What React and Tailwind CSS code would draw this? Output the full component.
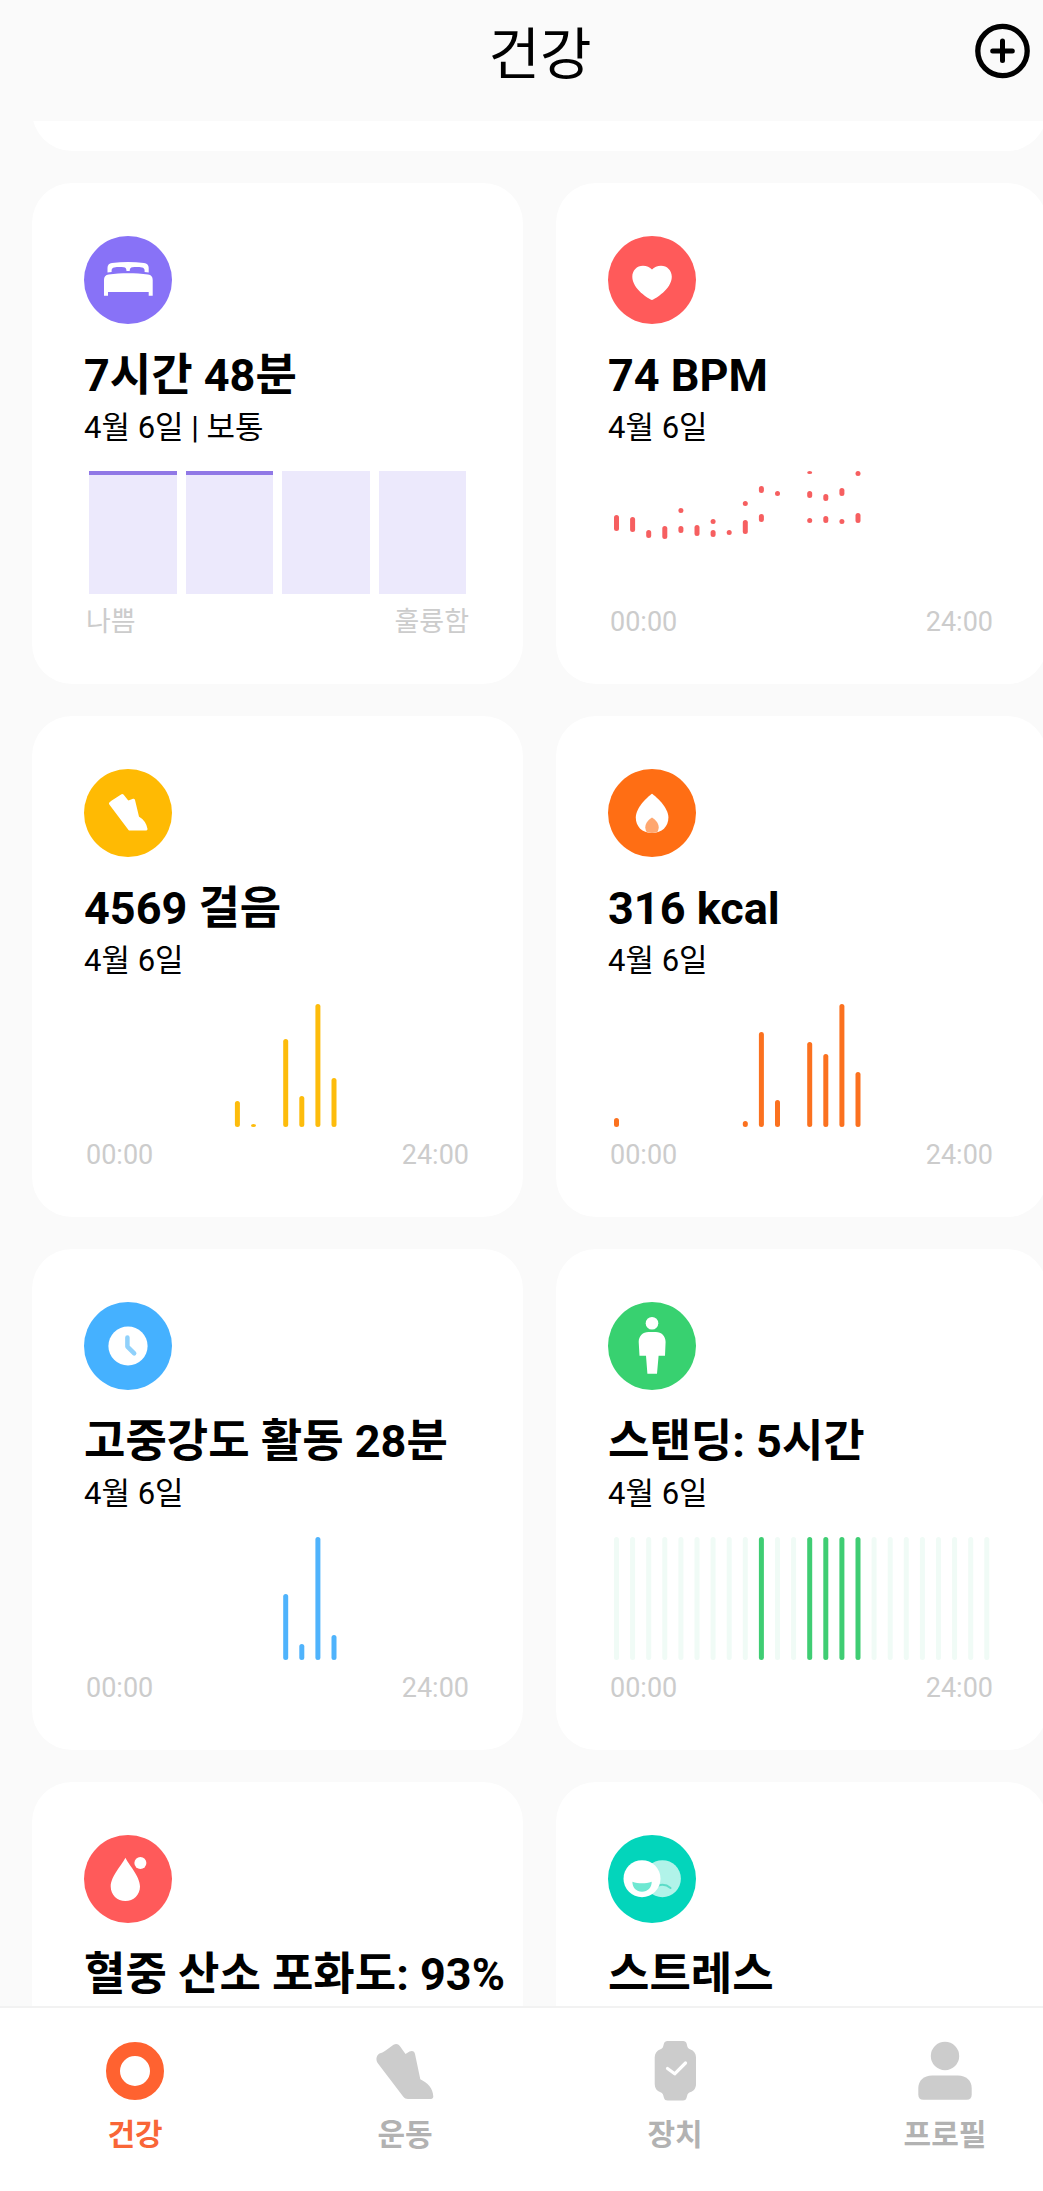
const HOURS = Array.from({ length: 24 }, (_, i) => i);
const CHART_HEIGHT = 123;

const barX = (hour) => 1 + hour * 16.1;

const stepBars = { 9: 26, 10: 3, 12: 88, 13: 31, 14: 123, 15: 49 };
const calorieBars = { 0: 9, 8: 6, 9: 95, 10: 27, 12: 85, 13: 73, 14: 123, 15: 55 };
const activityBars = { 12: 66, 13: 16, 14: 123, 15: 25 };
const standingHours = [9, 12, 13, 14, 15];

// [hour, top, bottom]
const heartRanges = [
  [0, 44, 60],
  [1, 46, 61],
  [2, 59, 67],
  [3, 55, 68],
  [4, 37, 42],
  [4, 55, 62],
  [5, 54, 65],
  [6, 48, 53],
  [6, 59, 66],
  [7, 59, 64],
  [8, 30, 35],
  [8, 49, 63],
  [9, 15, 22],
  [9, 43, 51],
  [10, 20, 25],
  [12, 0, 3],
  [12, 20, 27],
  [12, 47, 52],
  [13, 23, 30],
  [13, 45, 52],
  [14, 17, 25],
  [14, 48, 53],
  [15, 0, 5],
  [15, 42, 52],
];

function ChartFrame({ label, children }) {
  return (
    <svg
      role="img"
      aria-label={label}
      viewBox="0 0 377 123"
      preserveAspectRatio="none"
      className="block h-[123px] w-full"
    >
      {children}
    </svg>
  );
}

function BarChart({ label, bars, color }) {
  return (
    <ChartFrame label={label}>
      {Object.entries(bars).map(([hour, height]) => (
        <rect
          key={hour}
          x={barX(Number(hour))}
          y={CHART_HEIGHT - height}
          width="5"
          height={height}
          rx="2.5"
          fill={color}
        />
      ))}
    </ChartFrame>
  );
}

function HeartChart() {
  return (
    <ChartFrame label="심박수">
      {heartRanges.map(([hour, top, bottom]) => (
        <rect
          key={`${hour}-${top}`}
          x={barX(hour)}
          y={top}
          width="5"
          height={bottom - top}
          rx="2.5"
          fill="#f65f60"
        />
      ))}
    </ChartFrame>
  );
}

function StandingChart() {
  return (
    <ChartFrame label="스탠딩">
      {HOURS.map((hour) => (
        <rect
          key={hour}
          x={barX(hour)}
          y="0"
          width="5"
          height={CHART_HEIGHT}
          rx="2.5"
          fill={standingHours.includes(hour) ? '#3fcd73' : '#f0fbf6'}
        />
      ))}
    </ChartFrame>
  );
}

function SleepChart() {
  return (
    <div className="grid h-[123px] grid-cols-4 gap-[9px]">
      <div className="border-t-4 border-[#9078e6] bg-[#ece9fc]" />
      <div className="border-t-4 border-[#9078e6] bg-[#ece9fc]" />
      <div className="bg-[#ece9fc]" />
      <div className="bg-[#ece9fc]" />
    </div>
  );
}

function Badge({ color, children }) {
  return (
    <svg viewBox="0 0 88 88" className="block size-[88px]" aria-hidden="true">
      <circle cx="44" cy="44" r="44" fill={color} />
      {children}
    </svg>
  );
}

const icons = {
  sleep: (
    <Badge color="#8872f7">
      <path
        fill="#fff"
        d="M23.5 36.4V31.8C23.5 28.8 25 27.3 28 26.9C38.5 25.6 49.5 25.6 60 26.9C63 27.3 64.7 28.8 64.7 31.8V36.4L60.6 36V34.6C60.6 32.6 59.5 31.8 58 31.5C55 31 51.500 31 48.500 31.3C46.500 31.6 45.9 32.5 45.7 35H42.5C42.3 32.5 41.700 31.6 39.700 31.3C36.700 31 33.200 31 30.200 31.5C28.700 31.8 27.6 32.6 27.6 34.6V36Z"
      />
      <path
        fill="#fff"
        d="M20 59.7V44C20 40.6 21.5 39 24.6 38.5C37 36.8 51.5 36.8 64 38.5C67.2 39 68.7 40.6 68.7 44V59.7H64.7V56H24V59.7Z"
      />
    </Badge>
  ),
  heart: (
    <Badge color="#ff5a5a">
      <path
        fill="#fff"
        d="M44 64C41 63.2 24.3 53 24.3 40.8C24.3 34.5 28.8 29.7 35 29.7C38.6 29.7 41.9 31.1 44 33.5C46.1 31.1 49.4 29.7 53 29.7C59.2 29.7 63.8 34.5 63.8 40.8C63.8 53 47 63.2 44 64Z"
      />
    </Badge>
  ),
  steps: (
    <Badge color="#ffba03">
      <path
        fill="#fff"
        stroke="#fff"
        strokeWidth="3"
        strokeLinejoin="round"
        d="M26.5 34.5L29 32.5L38.3 26.5L43.7 33.3L49.5 31.2L53.7 48.5C58 51 61 54.5 62 60H45.7Z"
      />
    </Badge>
  ),
  calories: (
    <Badge color="#ff6e14">
      <path
        fill="#fff"
        d="M44 24.8C48 27.5 60.4 38.5 60.4 48.5C60.4 57.5 54 64 44 64C34 64 27.8 57.5 27.8 48.5C27.8 38.5 40 27.5 44 24.8Z"
      />
      <path
        fill="#ffa76f"
        d="M44 48.6C46.5 50.3 50.7 53.5 50.7 58.3C50.7 60.6 49.9 62.3 48.8 63.6C46 64.1 42 64.1 39.2 63.6C38.1 62.3 37.3 60.6 37.3 58.3C37.3 53.5 41.5 50.3 44 48.6Z"
      />
    </Badge>
  ),
  activity: (
    <Badge color="#45b1ff">
      <circle cx="44" cy="44" r="19.6" fill="#fff" />
      <path
        d="M43.4 35.4V44.6L50.2 51.4"
        fill="none"
        stroke="#90d1fb"
        strokeWidth="4.5"
        strokeLinecap="round"
        strokeLinejoin="round"
      />
    </Badge>
  ),
  standing: (
    <Badge color="#38d170">
      <circle cx="44" cy="21.2" r="6.3" fill="#fff" />
      <path
        fill="#fff"
        d="M40.5 30H47.8C53.5 30 57.6 34 57.6 40L57 53.8H50.6L49 71.7H39.4L38 53.8H31.5L30.7 40C30.7 34 34.8 30 40.5 30Z"
      />
    </Badge>
  ),
  oxygen: (
    <Badge color="#ff5a5a">
      <path
        fill="#fff"
        d="M41.4 22.7C43.5 28 56 41 56 51.5C56 60 49.5 66 41.4 66C33.3 66 26.7 60 26.7 51.5C26.7 41 39.3 28 41.4 22.7Z"
      />
      <circle cx="56.4" cy="28" r="6" fill="#fff" />
    </Badge>
  ),
  stress: (
    <Badge color="#03d5bb">
      <circle cx="54.4" cy="43.7" r="18.5" fill="#b1f3e9" />
      <path
        d="M50 50.7C54.5 49 59 50 62.5 53"
        fill="none"
        stroke="#5cdcc8"
        strokeWidth="2"
        strokeLinecap="round"
      />
      <circle cx="34" cy="43.7" r="18.5" fill="#fff" />
      <path
        fill="#6ee8d2"
        d="M24.4 46.7C30.5 48.7 37.5 48.7 43.7 46.7C43.8 52.5 39.7 56.7 34 56.7C28.3 56.7 24.3 52.5 24.4 46.7Z"
      />
    </Badge>
  ),
};

const cards = [
  {
    id: 'sleep',
    title: '7시간 48분',
    date: '4월 6일 | 보통',
    chart: <SleepChart />,
    range: ['나쁨', '훌륭함'],
  },
  { id: 'heart', title: '74 BPM', date: '4월 6일', chart: <HeartChart /> },
  {
    id: 'steps',
    title: '4569 걸음',
    date: '4월 6일',
    chart: <BarChart label="걸음" bars={stepBars} color="#fdbc0c" />,
  },
  {
    id: 'calories',
    title: '316 kcal',
    date: '4월 6일',
    chart: <BarChart label="칼로리" bars={calorieBars} color="#fb711f" />,
  },
  {
    id: 'activity',
    title: '고중강도 활동 28분',
    date: '4월 6일',
    chart: <BarChart label="활동" bars={activityBars} color="#4fb3fc" />,
  },
  { id: 'standing', title: '스탠딩: 5시간', date: '4월 6일', chart: <StandingChart /> },
  { id: 'oxygen', title: '혈중 산소 포화도: 93%' },
  { id: 'stress', title: '스트레스' },
];

function HealthCard({ id, title, date, chart, range = ['00:00', '24:00'] }) {
  return (
    <article className="min-h-[501px] rounded-[40px] bg-white px-[52px] pt-[53px]">
      {icons[id]}
      <h2 className="mt-[22px] text-[45px] leading-[60px] font-bold whitespace-nowrap">{title}</h2>
      {date && <p className="text-[31px] leading-[44px] whitespace-nowrap">{date}</p>}
      {chart && (
        <>
          <div className="mt-[21px] px-[5px]">{chart}</div>
          <div className="mt-2 flex justify-between px-[2px] text-[27px] leading-[40px] text-[#cccccc]">
            <span>{range[0]}</span>
            <span>{range[1]}</span>
          </div>
        </>
      )}
    </article>
  );
}

const tabs = [
  {
    label: '건강',
    active: true,
    icon: <circle cx="30" cy="30" r="22" fill="none" stroke="#ff6230" strokeWidth="14" />,
  },
  {
    label: '운동',
    icon: (
      <path
        fill="currentColor"
        d="M3 22.5C0 18.5 1.5 13 6 12C8 11.5 9.5 10.5 11 9.3L18.5 3.8C21 2.2 23.3 2.8 24.8 5L30.5 13L34.5 10.6C37.5 9.2 39.5 10.5 40 13L45.3 38.3C52.5 42 58 47 58.3 55.5C58.3 57 57.3 58 56 58H33C31 58 29.5 57.3 28.3 55.8Z"
      />
    ),
  },
  {
    label: '장치',
    icon: (
      <>
        <path
          fill="currentColor"
          d="M22.5 0H38C40 0 41.2 1 41.7 2.8L42.2 5C42.6 6.7 43.5 7.7 45 8.3C49 9.8 51 12.5 51 16.5V43C51 47 49 50 45 51.3C43.5 51.9 42.6 52.8 42.2 54.5L41.5 57C41 58.7 39.8 59.5 38 59.5H22.5C20.7 59.5 19.5 58.7 19 57L18.3 54.5C17.9 52.8 17 51.9 15.5 51.3C11.7 50 9.7 47 9.7 43V16.5C9.7 12.5 11.7 9.8 15.5 8.3C17 7.7 17.9 6.7 18.3 5L18.9 2.8C19.4 1 20.7 0 22.5 0Z"
        />
        <path
          d="M22.5 27.5L29.7 32.8L40.5 22"
          fill="none"
          stroke="#fff"
          strokeWidth="3.2"
          strokeLinecap="round"
          strokeLinejoin="round"
        />
      </>
    ),
  },
  {
    label: '프로필',
    icon: (
      <>
        <circle cx="30" cy="15" r="14.2" fill="currentColor" />
        <path
          fill="currentColor"
          d="M17 34.4H43C51 34.4 56.7 39.5 56.7 47V53.5C56.7 57 55 58.7 51.7 58.7H8.3C5 58.7 3.3 57 3.3 53.5V47C3.3 39.5 9 34.4 17 34.4Z"
        />
      </>
    ),
  },
];

function TabBar() {
  return (
    <nav className="grid h-[185px] shrink-0 grid-cols-4 border-t-2 border-[#f2f2f2] bg-white pt-[33px]">
      {tabs.map(({ label, active, icon }) => (
        <a
          key={label}
          href="#"
          aria-current={active ? 'page' : undefined}
          className="flex flex-col items-center gap-3"
        >
          <svg viewBox="0 0 60 60" className="size-[60px] text-[#cccccc]" aria-hidden="true">
            {icon}
          </svg>
          <span
            className={
              active
                ? 'text-[30px] leading-[44px] font-bold text-[#f96637]'
                : 'text-[30px] leading-[44px] font-bold text-[#b2b2b2]'
            }
          >
            {label}
          </span>
        </a>
      ))}
    </nav>
  );
}

export default function App() {
  return (
    <div className="h-screen overflow-hidden bg-[#fafafa] font-[Roboto,'Noto_Sans_CJK_KR',sans-serif] text-black">
      {/* the layout runs slightly past the right edge of the window */}
      <div className="flex h-full w-[calc(100%+37px)] flex-col">
        <header className="relative flex h-[121px] shrink-0 justify-center pt-[13px]">
          <h1 className="text-[56px] leading-[84px]">건강</h1>
          <button type="button" aria-label="추가" className="absolute top-[23px] right-[49px]">
            <svg viewBox="0 0 56 56" className="block size-[56px]" fill="none" stroke="#000">
              <circle cx="27.5" cy="28" r="24.7" strokeWidth="5.3" />
              <path d="M27.5 18V37.5M17.700 28H37.300" strokeWidth="5" strokeLinecap="round" />
            </svg>
          </button>
        </header>

        <main className="flex-1 overflow-hidden pr-[33px] pl-8">
          <div className="-mt-[34px] h-16 rounded-b-[40px] bg-white" />
          <div className="mt-8 grid grid-cols-2 gap-x-[33px] gap-y-8">
            {cards.map((card) => (
              <HealthCard key={card.id} {...card} />
            ))}
          </div>
        </main>

        <TabBar />
      </div>
    </div>
  );
}
